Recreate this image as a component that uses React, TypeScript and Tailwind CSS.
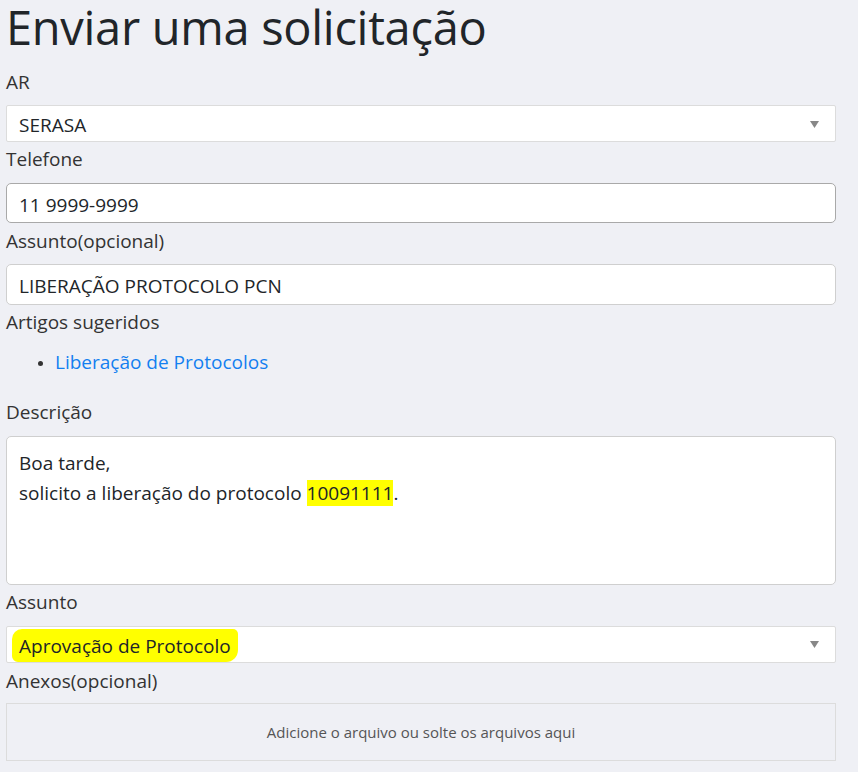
export default function App() {
  const label = "block text-[19px] leading-[24px] text-[#333]";
  return (
    <div className="min-h-screen bg-[#eff0f5] pl-[6px] pr-[22px] text-[#212529] font-['Open_Sans',sans-serif]">
      <h1 className="text-[47px] leading-[62px] -mt-[4px] mb-[12px] font-normal text-[#212529] tracking-[-0.3px]">Enviar uma solicitação</h1>

      <label className={label}>AR</label>
      <div className="mt-[11px] h-[37px] bg-white border border-[#dcdcdc] rounded-[2px] flex items-center justify-between pl-[12px] pr-[16px] pt-[4px] text-[19px]">
        <span>SERASA</span>
        <Arrow />
      </div>

      <label className={`${label} mt-[5px]`}>Telefone</label>
      <div className="mt-[12px] h-[40px] bg-white border border-[#a9a9a9] rounded-[5px] flex items-center pl-[12px] pt-[4px] text-[19px]">
        11 9999-9999
      </div>

      <label className={`${label} mt-[6px]`}>Assunto(opcional)</label>
      <div className="mt-[11px] h-[41px] bg-white border border-[#cfcfcf] rounded-[5px] flex items-center pl-[12px] pt-[4px] text-[19px]">
        LIBERAÇÃO PROTOCOLO PCN
      </div>

      <label className={`${label} mt-[5px]`}>Artigos sugeridos</label>
      <ul className="mt-[16px] pl-[32px] text-[19px] leading-[24px]">
        <li className="flex items-center gap-[12px]">
          <span className="w-[5px] h-[5px] rounded-full bg-[#333] mt-[2px]" />
          <a className="text-[#137ff0]">Liberação de Protocolos</a>
        </li>
      </ul>

      <label className={`${label} mt-[26px]`}>Descrição</label>
      <div className="mt-[12px] h-[149px] bg-white border border-[#cfcfcf] rounded-[5px] pl-[12px] pt-[11px] text-[19px] leading-[30px]">
        <div>Boa tarde,</div>
        <div>
          solicito a liberação do protocolo <span className="bg-[#ffff00]">10091111</span>.
        </div>
      </div>

      <label className={`${label} mt-[5px]`}>Assunto</label>
      <div className="mt-[12px] h-[37px] bg-white border border-[#dcdcdc] rounded-[2px] flex items-center justify-between pl-[5px] pr-[16px] pt-[2px] text-[19px]">
        <span className="bg-[#ffff00] px-[7px] pt-[4px] pb-[3px] rounded-tl-[10px] rounded-tr-[5px] rounded-br-[12px] rounded-bl-[6px] leading-[26px]">Aprovação de Protocolo</span>
        <Arrow />
      </div>

      <label className={`${label} mt-[6px]`}>Anexos(opcional)</label>
      <div className="mt-[10px] h-[58px] border border-[#dcdcdc] flex items-center justify-center text-[15px] text-[#555]">
        Adicione o arquivo ou solte os arquivos aqui
      </div>
    </div>
  );
}

function Arrow() {
  return (
    <svg width="9" height="7" viewBox="0 0 9 7" className="-mt-[3px]">
      <path d="M0 0 L9 0 L4.5 7 Z" fill="#888" />
    </svg>
  );
}
